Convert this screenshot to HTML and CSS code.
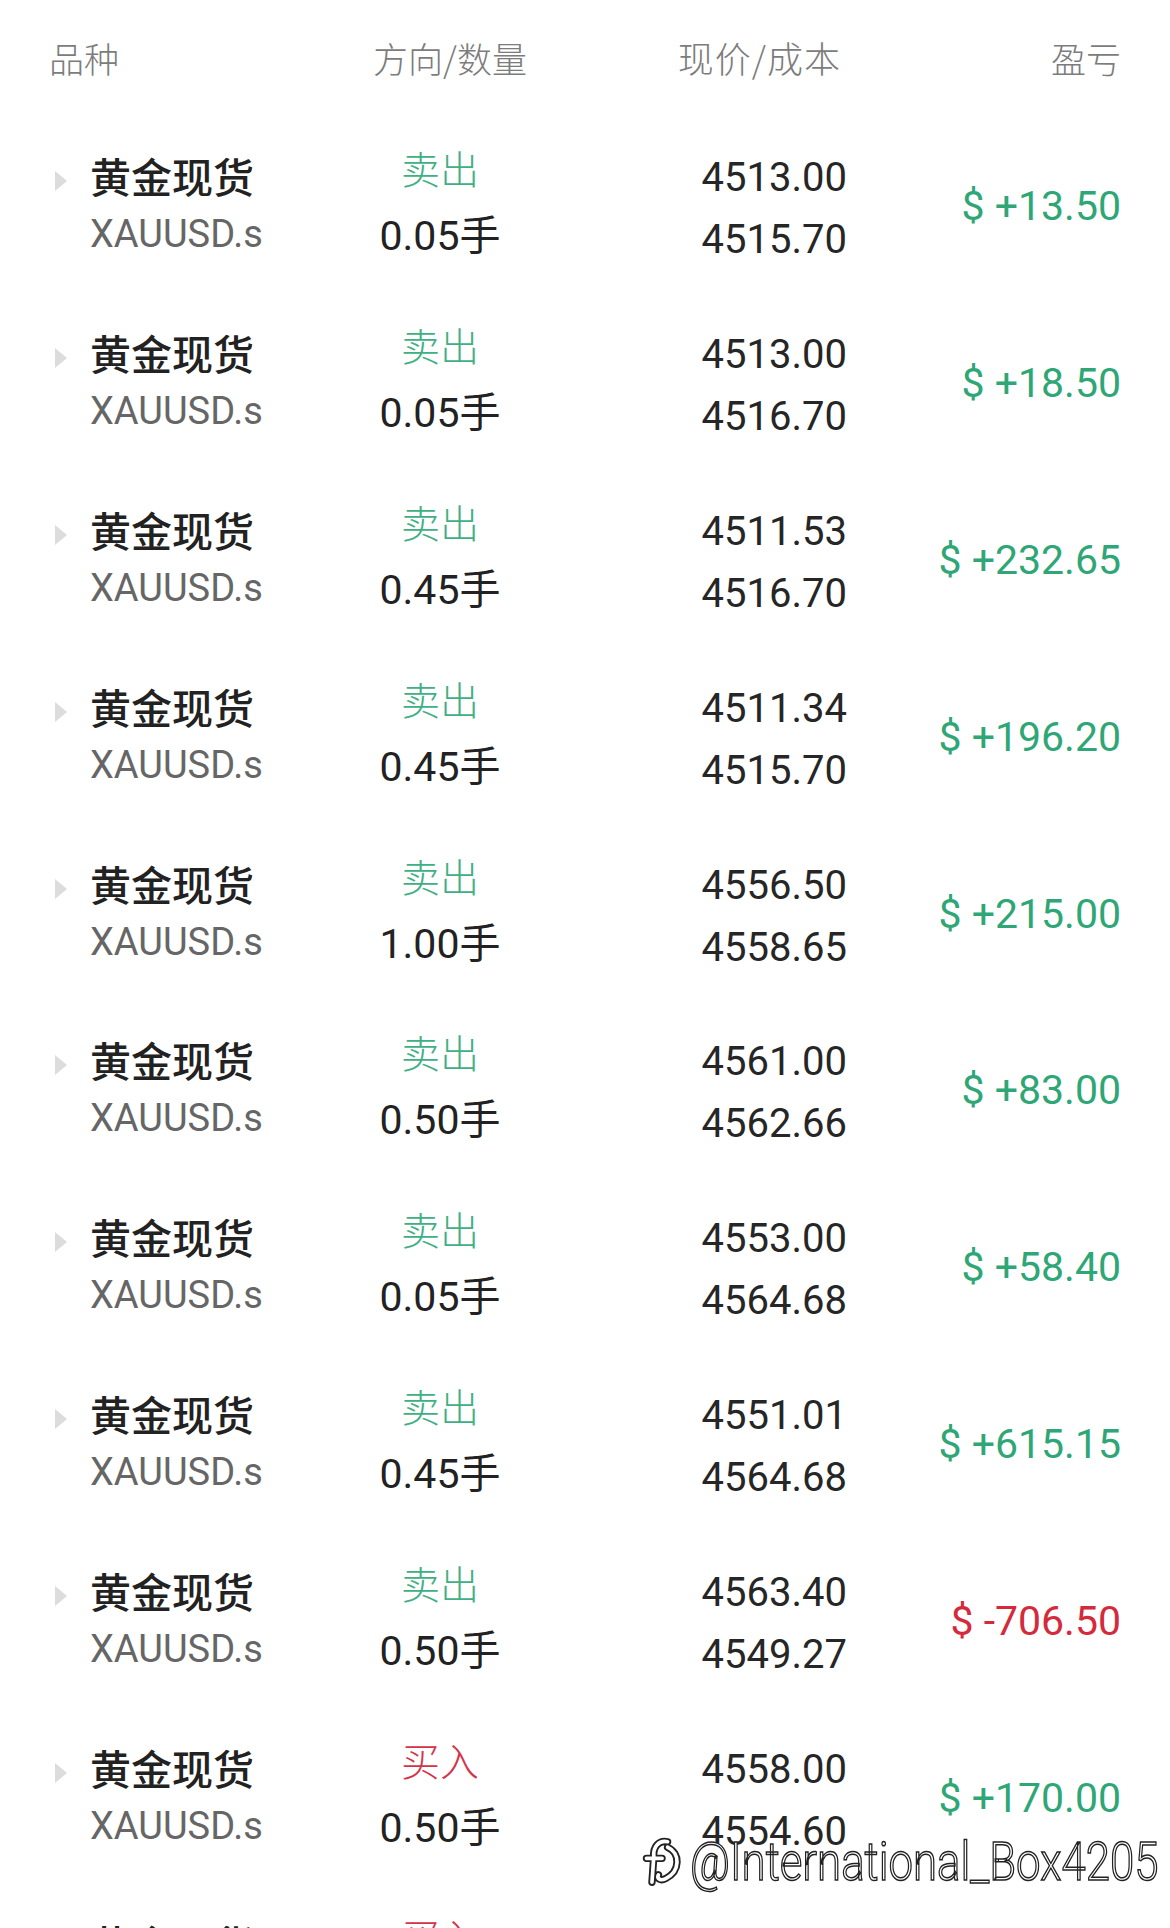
FILE: index.html
```html
<!DOCTYPE html>
<html lang="zh-CN">
<head>
  <meta charset="UTF-8" />
  <meta name="viewport" content="width=device-width, initial-scale=1.0"/>
  <title>持仓</title>
  <link rel="stylesheet" href="styles.css">
</head>
<body>
  <div class="positions">
    <div class="head">
      <div class="h-name">品种</div>
      <div class="h-dir">方向/数量</div>
      <div class="h-price">现价/成本</div>
      <div class="h-pl">盈亏</div>
    </div>

    <div class="row">
      <div class="sym"><span class="caret"></span><div><div class="name">黄金现货</div><div class="code">XAUUSD.s</div></div></div>
      <div class="dir"><div class="side sell">卖出</div><div class="lots">0.05手</div></div>
      <div class="price"><div>4513.00</div><div>4515.70</div></div>
      <div class="pl up">$ +13.50</div>
    </div>

    <div class="row">
      <div class="sym"><span class="caret"></span><div><div class="name">黄金现货</div><div class="code">XAUUSD.s</div></div></div>
      <div class="dir"><div class="side sell">卖出</div><div class="lots">0.05手</div></div>
      <div class="price"><div>4513.00</div><div>4516.70</div></div>
      <div class="pl up">$ +18.50</div>
    </div>

    <div class="row">
      <div class="sym"><span class="caret"></span><div><div class="name">黄金现货</div><div class="code">XAUUSD.s</div></div></div>
      <div class="dir"><div class="side sell">卖出</div><div class="lots">0.45手</div></div>
      <div class="price"><div>4511.53</div><div>4516.70</div></div>
      <div class="pl up">$ +232.65</div>
    </div>

    <div class="row">
      <div class="sym"><span class="caret"></span><div><div class="name">黄金现货</div><div class="code">XAUUSD.s</div></div></div>
      <div class="dir"><div class="side sell">卖出</div><div class="lots">0.45手</div></div>
      <div class="price"><div>4511.34</div><div>4515.70</div></div>
      <div class="pl up">$ +196.20</div>
    </div>

    <div class="row">
      <div class="sym"><span class="caret"></span><div><div class="name">黄金现货</div><div class="code">XAUUSD.s</div></div></div>
      <div class="dir"><div class="side sell">卖出</div><div class="lots">1.00手</div></div>
      <div class="price"><div>4556.50</div><div>4558.65</div></div>
      <div class="pl up">$ +215.00</div>
    </div>

    <div class="row">
      <div class="sym"><span class="caret"></span><div><div class="name">黄金现货</div><div class="code">XAUUSD.s</div></div></div>
      <div class="dir"><div class="side sell">卖出</div><div class="lots">0.50手</div></div>
      <div class="price"><div>4561.00</div><div>4562.66</div></div>
      <div class="pl up">$ +83.00</div>
    </div>

    <div class="row">
      <div class="sym"><span class="caret"></span><div><div class="name">黄金现货</div><div class="code">XAUUSD.s</div></div></div>
      <div class="dir"><div class="side sell">卖出</div><div class="lots">0.05手</div></div>
      <div class="price"><div>4553.00</div><div>4564.68</div></div>
      <div class="pl up">$ +58.40</div>
    </div>

    <div class="row">
      <div class="sym"><span class="caret"></span><div><div class="name">黄金现货</div><div class="code">XAUUSD.s</div></div></div>
      <div class="dir"><div class="side sell">卖出</div><div class="lots">0.45手</div></div>
      <div class="price"><div>4551.01</div><div>4564.68</div></div>
      <div class="pl up">$ +615.15</div>
    </div>

    <div class="row">
      <div class="sym"><span class="caret"></span><div><div class="name">黄金现货</div><div class="code">XAUUSD.s</div></div></div>
      <div class="dir"><div class="side sell">卖出</div><div class="lots">0.50手</div></div>
      <div class="price"><div>4563.40</div><div>4549.27</div></div>
      <div class="pl down">$ -706.50</div>
    </div>

    <div class="row">
      <div class="sym"><span class="caret"></span><div><div class="name">黄金现货</div><div class="code">XAUUSD.s</div></div></div>
      <div class="dir"><div class="side buy">买入</div><div class="lots">0.50手</div></div>
      <div class="price"><div>4558.00</div><div>4554.60</div></div>
      <div class="pl up">$ +170.00</div>
    </div>

    <div class="row">
      <div class="sym"><span class="caret"></span><div><div class="name">黄金现货</div><div class="code">XAUUSD.s</div></div></div>
      <div class="dir"><div class="side buy">买入</div><div class="lots">0.50手</div></div>
      <div class="price"><div>4558.00</div><div>4554.60</div></div>
      <div class="pl up">$ +170.00</div>
    </div>
  </div>

  <!-- watermark over the list -->
  <div class="watermark">
    <svg class="wm-logo" viewBox="0 0 50 56" width="46" height="52">
      <path d="M30 6 C20 4 14 12 15 22 L13 50 M7 24 L24 24 M30 12 C44 18 44 38 28 46 C22 49 18 46 20 42"
            fill="none" stroke="#222" stroke-width="8" stroke-linecap="round"/>
      <path d="M30 6 C20 4 14 12 15 22 L13 50 M7 24 L24 24 M30 12 C44 18 44 38 28 46 C22 49 18 46 20 42"
            fill="none" stroke="#fff" stroke-width="4" stroke-linecap="round"/>
    </svg>
    <span class="wm-text">@International_Box4205</span>
  </div>
</body>
</html>
```

FILE: styles.css
```css
* {
  box-sizing: border-box;
}

html, body {
  overflow: hidden;
}

body {
  margin: 0;
  background: #fff;
  color: #232323;
  font-family: 'Roboto', 'Noto Sans CJK SC', sans-serif;
  height: 1928px;
  position: relative;
}

.positions {
  padding: 0 49px;
}

.head,
.row {
  display: grid;
  grid-template-columns: 291px 200px 307px 1fr;
  align-items: center;
}

.head {
  height: 118px;
  padding-bottom: 4px;
  font-family: 'Noto Sans CJK SC', sans-serif;
  font-weight: 300;
  font-size: 35px;
  color: #7c7c7c;
}

.h-dir {
  text-align: center;
  padding-left: 20px;
}

.h-price {
  text-align: right;
  padding-right: 6px;
  font-size: 36px;
  letter-spacing: 1px;
}

.h-pl {
  text-align: right;
}

.row {
  height: 176.8px;
}

.sym {
  display: flex;
  align-items: flex-start;
}

.caret {
  width: 0;
  height: 0;
  margin: 24px 23px 0 6px;
  border-top: 10px solid transparent;
  border-bottom: 10px solid transparent;
  border-left: 12px solid #dcdcdc;
}

.name {
  font-family: 'Noto Sans CJK SC', sans-serif;
  font-weight: 500;
  font-size: 41px;
  line-height: 56px;
  color: #222;
}

.code {
  font-size: 38px;
  line-height: 62px;
  color: #666;
}

.dir {
  text-align: center;
  padding-bottom: 9px;
}

.side {
  font-family: 'Noto Sans CJK SC', sans-serif;
  font-weight: 300;
  font-size: 39px;
  line-height: 52px;
  margin-bottom: 17px;
}

.sell {
  color: #3fb083;
}

.buy {
  color: #d4344a;
}

.lots {
  font-size: 41px;
  line-height: 52px;
  color: #222;
}

.price {
  text-align: right;
  font-size: 40px;
  line-height: 62px;
  padding-top: 6px;
  color: #262626;
}

.pl {
  text-align: right;
  font-size: 41px;
}

.up {
  color: #2ea676;
}

.down {
  color: #d42a3c;
}

.watermark {
  position: absolute;
  left: 640px;
  top: 1834px;
  display: flex;
  align-items: center;
}

.wm-logo {
  margin-right: 4px;
}

.wm-text {
  display: inline-block;
  font-family: 'Roboto', sans-serif;
  font-weight: 300;
  font-size: 54px;
  line-height: 56px;
  color: #fff;
  -webkit-text-stroke: 1.5px #222;
  transform: scaleX(0.81);
  transform-origin: left center;
  white-space: nowrap;
}
```
